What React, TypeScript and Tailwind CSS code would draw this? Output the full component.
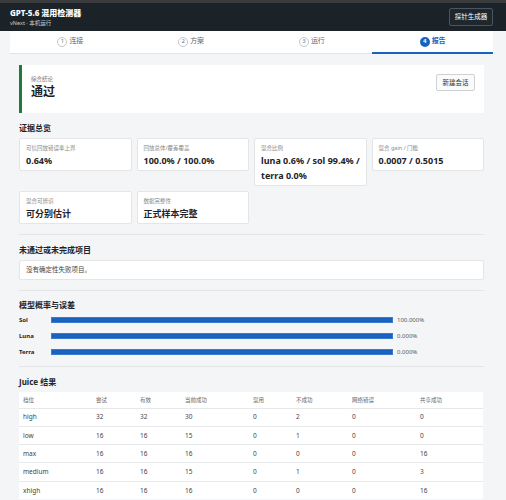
import React from 'react'

const font = { fontFamily: '"Noto Sans", "Noto Sans CJK SC", sans-serif' }

const steps = [
  { n: '1', label: '连接' },
  { n: '2', label: '方案' },
  { n: '3', label: '运行' },
  { n: '4', label: '报告', active: true },
]

const evidence = [
  { label: '可信回放错误率上界', value: '0.64%' },
  { label: '回放总体/覆差覆盖', value: '100.0% / 100.0%' },
  { label: '混合比例', value: 'luna 0.6% / sol 99.4% / terra 0.0%' },
  { label: '混合 gain / 门槛', value: '0.0007 / 0.5015' },
  { label: '混合可辨识', value: '可分别估计' },
  { label: '数据完整性', value: '正式样本完整' },
]

const bars = [
  { name: 'Sol', value: '100.000%' },
  { name: 'Luna', value: '0.000%' },
  { name: 'Terra', value: '0.000%' },
]

const cols = [
  { h: '档位', w: 'w-[73px]' },
  { h: '尝试', w: 'w-[44px]' },
  { h: '有效', w: 'w-[45px]' },
  { h: '当前成功', w: 'w-[68px]' },
  { h: '混用', w: 'w-[43px]' },
  { h: '不成功', w: 'w-[56px]' },
  { h: '网络错误', w: 'w-[68px]' },
  { h: '共享成功', w: 'w-[67px]' },
]

const rows = [
  ['high', '32', '32', '30', '0', '2', '0', '0'],
  ['low', '16', '16', '15', '0', '1', '0', '0'],
  ['max', '16', '16', '16', '0', '0', '0', '16'],
  ['medium', '16', '16', '15', '0', '1', '0', '3'],
  ['xhigh', '16', '16', '16', '0', '0', '0', '16'],
]

function Heading({ children }: { children: React.ReactNode }) {
  return <h2 className="text-[8px] leading-[10px] font-bold text-[#1f2328]">{children}</h2>
}

export default function App() {
  return (
    <div className="min-h-[500px] bg-[#f4f5f6]" style={font}>
      {/* top bar */}
      <header className="h-[31px] border-t-[3px] border-[#3a3b3c] bg-[#1b2329] pl-[10px] pr-[13px] flex items-center justify-between">
        <div className="flex flex-col">
          <div className="text-[8px] leading-[10px] font-extrabold text-white">GPT-5.6 混用检测器</div>
          <div className="mt-[2px] text-[5.5px] leading-[7px] text-[#c9d0d6]">vNext · 本机运行</div>
        </div>
        <button className="h-[18px] w-[44px] rounded-[2px] border border-[#4a5560] bg-[#1e272e] text-[6.5px] text-white">
          探针生成器
        </button>
      </header>

      <div className="pl-[10px] pr-[13px]">
        {/* stepper */}
        <nav className="flex bg-white">
          {steps.map((s) =>
            s.active ? (
              <div key={s.n} className="flex-1 h-[23px] border-b-2 border-[#1565c0] flex items-center justify-center gap-[2px]">
                <span className="w-[10px] h-[10px] rounded-full bg-[#1565c0] text-white text-[6px] font-bold flex items-center justify-center">
                  {s.n}
                </span>
                <span className="text-[7px] font-bold text-[#1565c0]">{s.label}</span>
              </div>
            ) : (
              <div key={s.n} className="flex-1 h-[23px] border-b border-[#e2e4e6] pb-[1px] flex items-center justify-center gap-[2px]">
                <span className="w-[10px] h-[10px] rounded-full border border-[#c4c7ca] text-[#777] text-[6px] flex items-center justify-center">
                  {s.n}
                </span>
                <span className="text-[7px] text-[#666]">{s.label}</span>
              </div>
            )
          )}
        </nav>

        <main className="px-[9px]">
          {/* verdict */}
          <section className="mt-[11px] h-[48px] bg-white border-l-[3px] border-[#1e7b3e] pl-[9px] pr-[9px] pt-[9px] flex items-start justify-between">
            <div className="pt-[2px]">
              <div className="text-[5.5px] leading-[7px] text-[#777]">综合结论</div>
              <div className="mt-[2px] text-[12px] leading-[13px] font-bold text-[#1f2328]">通过</div>
            </div>
            <button className="h-[17px] w-[39px] rounded-[2px] border border-[#cfd2d5] bg-[#fbfbfb] text-[6.5px] text-[#333]">
              新建会话
            </button>
          </section>

          {/* evidence */}
          <section className="mt-[10px]">
            <Heading>证据总览</Heading>
            <div className="mt-[5px] grid grid-cols-4 gap-[5px] items-start">
              {evidence.map((e) => (
                <div key={e.label} className="bg-white border border-[#e3e5e7] rounded-[2px] pl-[6px] pr-[2px] pt-[6px] pb-[2px]">
                  <div className="text-[5.5px] leading-[7px] text-[#888]">{e.label}</div>
                  <div className="mt-[1px] text-[9px] leading-[15px] font-bold text-[#1f2328]">{e.value}</div>
                </div>
              ))}
            </div>
          </section>

          {/* failures */}
          <section className="mt-[10px] border-t border-[#e3e5e7] pt-[10px]">
            <Heading>未通过或未完成项目</Heading>
            <div className="mt-[5px] h-[20px] bg-white border border-[#e3e5e7] rounded-[2px] px-[6px] flex items-center text-[6.5px] text-[#444]">
              没有确定性失败项目。
            </div>
          </section>

          {/* probabilities */}
          <section className="mt-[10px] border-t border-[#e3e5e7] pt-[9px]">
            <Heading>模型概率与误差</Heading>
            <div className="mt-[2px]">
              {bars.map((b) => (
                <div key={b.name} className="h-[16px] flex items-center">
                  <span className="w-[32px] text-[6px] font-bold text-[#1f2328]">{b.name}</span>
                  <div className="flex-1 h-[6px] bg-[#1a62bd] border border-[#3a7bd0]" />
                  <span className="w-[91px] pl-[4px] text-[6px] text-[#555]">{b.value}</span>
                </div>
              ))}
            </div>
          </section>

          {/* juice table */}
          <section className="mt-[6px] border-t border-[#e3e5e7] pt-[10px]">
            <Heading>Juice 结果</Heading>
            <table className="mt-[5px] w-[464px] bg-white border-collapse">
              <thead>
                <tr className="h-[16px]">
                  {cols.map((c) => (
                    <th key={c.h} className={`${c.w} pl-[4px] text-left font-normal text-[5.5px] text-[#666]`}>
                      {c.h}
                    </th>
                  ))}
                </tr>
              </thead>
              <tbody>
                {rows.map((r) => (
                  <tr key={r[0]} className="h-[18.3px] border-t border-[#e6e8ea]">
                    {r.map((v, i) => (
                      <td key={i} className="pl-[4px] text-[6.5px] text-[#444]">
                        {v}
                      </td>
                    ))}
                  </tr>
                ))}
              </tbody>
            </table>
          </section>
        </main>
      </div>
    </div>
  )
}
